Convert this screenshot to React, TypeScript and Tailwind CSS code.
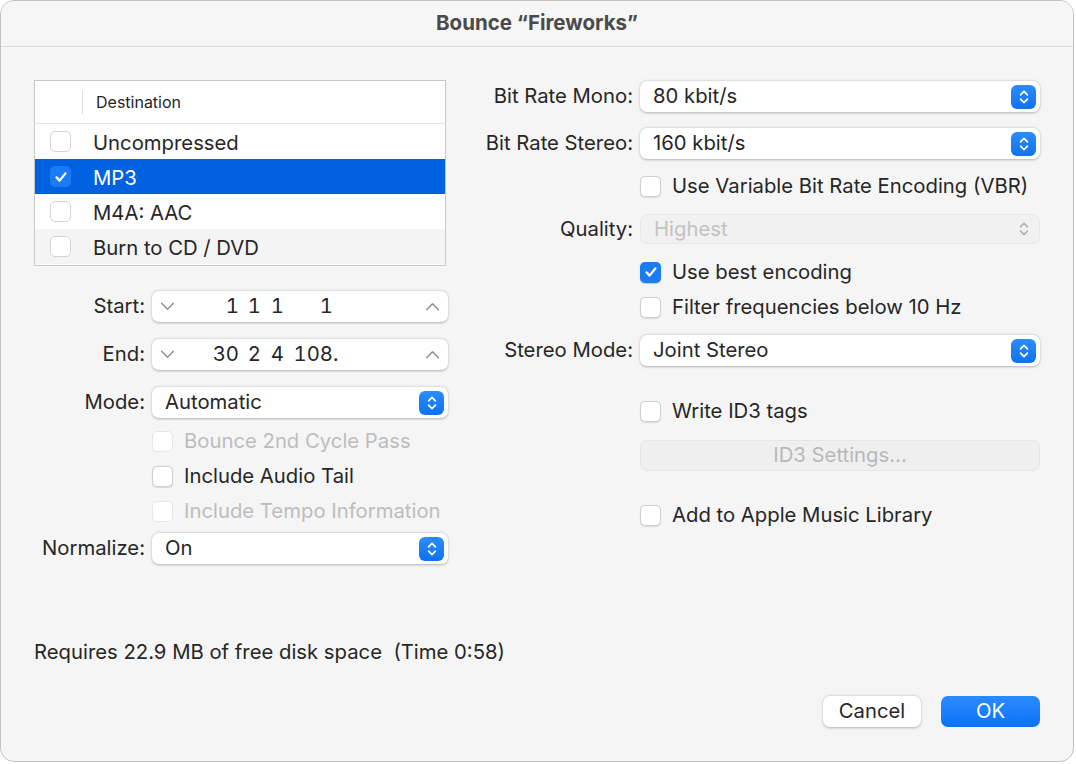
import React from "react";

const Tick = () => (
  <svg viewBox="0 0 14 14" className="w-[14px] h-[14px]">
    <path d="M2.6 7.4 L5.6 10.6 L11.4 3.4" stroke="white" strokeWidth="2.3" fill="none" strokeLinecap="round" strokeLinejoin="round" />
  </svg>
);

function Checkbox({ checked = false, disabled = false }: { checked?: boolean; disabled?: boolean }) {
  if (checked) {
    return (
      <div className="w-[21px] h-[21px] rounded-[5px] bg-[#1a7cf5] flex items-center justify-center shrink-0 shadow-[0_0.5px_1px_rgba(0,0,0,0.2)]">
        <Tick />
      </div>
    );
  }
  return (
    <div
      className={`w-[21px] h-[21px] rounded-[5px] bg-white shrink-0 border ${
        disabled ? "border-[#e6e6e6] bg-[#fafafa]" : "border-[#d0d0d0] shadow-[0_0.5px_1px_rgba(0,0,0,0.12)]"
      }`}
    />
  );
}

function CheckRow({ label, checked, disabled }: { label: string; checked?: boolean; disabled?: boolean }) {
  return (
    <div className="flex items-center gap-[11px] h-[22px]">
      <Checkbox checked={checked} disabled={disabled} />
      <span className={`text-[20.3px] leading-none whitespace-nowrap ${disabled ? "text-[#bdbdbd]" : "text-[#262626]"}`}>{label}</span>
    </div>
  );
}

const UpDown = ({ color = "white" }: { color?: string }) => (
  <svg viewBox="0 0 14 20" className="w-[12px] h-[18px]">
    <path d="M3 7.5 L7 3.5 L11 7.5 M3 12.5 L7 16.5 L11 12.5" stroke={color} strokeWidth="1.9" fill="none" strokeLinecap="round" strokeLinejoin="round" />
  </svg>
);

function Popup({ value, disabled = false }: { value: string; disabled?: boolean }) {
  if (disabled) {
    return (
      <div className="h-[30px] w-full rounded-[7px] bg-[#f1f1f1] border border-[#e8e8e8] flex items-center justify-between pl-[13px] pr-[9px]">
        <span className="text-[20.3px] leading-none text-[#c2c2c2]">{value}</span>
        <UpDown color="#b0b0b0" />
      </div>
    );
  }
  return (
    <div className="h-[31px] w-full rounded-[7px] bg-white shadow-[0_0.5px_2.5px_rgba(0,0,0,0.28)] flex items-center justify-between pl-[13px] pr-[4px]">
      <span className="text-[20.3px] leading-none text-[#262626]">{value}</span>
      <div className="w-[25px] h-[24px] rounded-[6px] bg-gradient-to-b from-[#2c8cff] to-[#0b72f0] flex items-center justify-center">
        <UpDown />
      </div>
    </div>
  );
}

const Chevron = ({ up = false }: { up?: boolean }) => (
  <svg viewBox="0 0 16 10" className="w-[15px] h-[9px]">
    <path d={up ? "M1.5 8.5 L8 2 L14.5 8.5" : "M1.5 1.5 L8 8 L14.5 1.5"} stroke="#8e8e8e" strokeWidth="1.6" fill="none" strokeLinecap="round" strokeLinejoin="round" />
  </svg>
);

function Position({ segs, dot = false }: { segs: string[]; dot?: boolean }) {
  return (
    <div className="h-[31px] w-full rounded-[7px] bg-white shadow-[0_0.5px_2.5px_rgba(0,0,0,0.28)] flex items-center pl-[8px] pr-[8px]">
      <Chevron />
      <div className="flex items-center text-[20.3px] leading-none text-[#262626] tabular-nums ml-[25px]">
        <span className="w-[39px] text-right">{segs[0]}</span>
        <span className="w-[22px] text-right">{segs[1]}</span>
        <span className="w-[23px] text-right">{segs[2]}</span>
        <span className="w-[49px] text-right">{segs[3]}</span>
        {dot && <span>.</span>}
      </div>
      <div className="ml-auto">
        <Chevron up />
      </div>
    </div>
  );
}

function LeftRow({ label, children, className = "" }: { label: string; children: React.ReactNode; className?: string }) {
  return (
    <div className={`flex items-center ${className}`}>
      <span className="w-[111px] text-right text-[20.3px] leading-none text-[#262626] whitespace-nowrap">{label}</span>
      <div className="ml-[7px] w-[296px]">{children}</div>
    </div>
  );
}

function RightRow({ label, children, className = "" }: { label: string; children: React.ReactNode; className?: string }) {
  return (
    <div className={`flex items-center ${className}`}>
      <span className="w-[153px] text-right text-[20.3px] leading-none text-[#262626] whitespace-nowrap">{label}</span>
      <div className="ml-[7px] w-[400px]">{children}</div>
    </div>
  );
}

const destinations = [
  { name: "Uncompressed", checked: false, bg: "bg-white" },
  { name: "MP3", checked: true, bg: "bg-[#0062e1]" },
  { name: "M4A: AAC", checked: false, bg: "bg-white" },
  { name: "Burn to CD / DVD", checked: false, bg: "bg-[#f4f4f4]" },
];

export default function App() {
  return (
    <div className="w-[1076px] h-[764px] bg-white font-['Inter',sans-serif]">
      <div className="w-[1074px] h-[762px] rounded-[14px] border border-[#c2c2c2] bg-[#f5f5f5] overflow-hidden flex flex-col">
        <div className="h-[46px] shrink-0 border-b border-[#dddddd] bg-[#f6f6f6] flex items-center justify-center">
          <span className="text-[20.5px] font-bold text-[#4a4a4a]">Bounce “Fireworks”</span>
        </div>

        <div className="flex flex-col px-[33px] pt-[33px]">
          <div className="flex">
            {/* left column */}
            <div className="w-[414px] flex flex-col">
              <div className="w-[412px] h-[186px] border border-[#c8c8c8] bg-white flex flex-col">
                <div className="h-[43px] shrink-0 border-b border-[#e3e3e3] flex items-center">
                  <div className="w-[1px] h-[24px] bg-[#dedede] ml-[47px]" />
                  <span className="ml-[13px] text-[16px] text-[#262626]">Destination</span>
                </div>
                {destinations.map((d) => (
                  <div key={d.name} className={`h-[35px] flex items-center ${d.bg}`}>
                    <div className="ml-[15px]">
                      {d.checked ? (
                        <div className="w-[21px] h-[21px] rounded-[5px] bg-[#1a7cf5] flex items-center justify-center">
                          <Tick />
                        </div>
                      ) : (
                        <div className="w-[21px] h-[21px] rounded-[5px] bg-white border border-[#d4d4d4]" />
                      )}
                    </div>
                    <span className={`ml-[22px] pt-[3px] text-[20.3px] leading-none ${d.checked ? "text-white" : "text-[#262626]"}`}>{d.name}</span>
                  </div>
                ))}
              </div>

              <LeftRow label="Start:" className="mt-[25px]">
                <Position segs={["1", "1", "1", "1"]} />
              </LeftRow>
              <LeftRow label="End:" className="mt-[17px]">
                <Position segs={["30", "2", "4", "108"]} dot />
              </LeftRow>
              <LeftRow label="Mode:" className="mt-[17px]">
                <Popup value="Automatic" />
              </LeftRow>
              <div className="ml-[118px] mt-[12px] flex flex-col gap-[13px]">
                <CheckRow label="Bounce 2nd Cycle Pass" disabled />
                <CheckRow label="Include Audio Tail" />
                <CheckRow label="Include Tempo Information" disabled />
              </div>
              <LeftRow label="Normalize:" className="mt-[11px]">
                <Popup value="On" />
              </LeftRow>
            </div>

            {/* right column */}
            <div className="ml-[32px] flex flex-col">
              <RightRow label="Bit Rate Mono:" className="mt-[1px]">
                <Popup value="80 kbit/s" />
              </RightRow>
              <RightRow label="Bit Rate Stereo:" className="mt-[16px]">
                <Popup value="160 kbit/s" />
              </RightRow>
              <div className="ml-[160px] mt-[16px]">
                <CheckRow label="Use Variable Bit Rate Encoding (VBR)" />
              </div>
              <RightRow label="Quality:" className="mt-[17px]">
                <Popup value="Highest" disabled />
              </RightRow>
              <div className="ml-[160px] mt-[17px] flex flex-col gap-[13px]">
                <CheckRow label="Use best encoding" checked />
                <CheckRow label="Filter frequencies below 10 Hz" />
              </div>
              <RightRow label="Stereo Mode:" className="mt-[17px]">
                <Popup value="Joint Stereo" />
              </RightRow>
              <div className="ml-[160px] mt-[34px]">
                <CheckRow label="Write ID3 tags" />
              </div>
              <div className="ml-[160px] mt-[18px] w-[400px] h-[31px] rounded-[7px] bg-[#efefef] border border-[#e6e6e6] flex items-center justify-center">
                <span className="text-[20.3px] leading-none text-[#b9b9b9]">ID3 Settings...</span>
              </div>
              <div className="ml-[160px] mt-[33px]">
                <CheckRow label="Add to Apple Music Library" />
              </div>
            </div>
          </div>

          <div className="mt-[76px] h-[24px] flex items-center text-[20.3px] leading-none text-[#262626] whitespace-pre">
            Requires 22.9 MB of free disk space  (Time 0:58)
          </div>

          <div className="mt-[32px] flex justify-end gap-[20px]">
            <button className="w-[98px] h-[31px] rounded-[7px] bg-white shadow-[0_0.5px_2.5px_rgba(0,0,0,0.28)] text-[20.3px] leading-none text-[#262626]">
              Cancel
            </button>
            <button className="w-[99px] h-[31px] rounded-[7px] bg-gradient-to-b from-[#2a8bff] to-[#0a73f5] text-[20.3px] leading-none text-white">
              OK
            </button>
          </div>
        </div>
      </div>
    </div>
  );
}
